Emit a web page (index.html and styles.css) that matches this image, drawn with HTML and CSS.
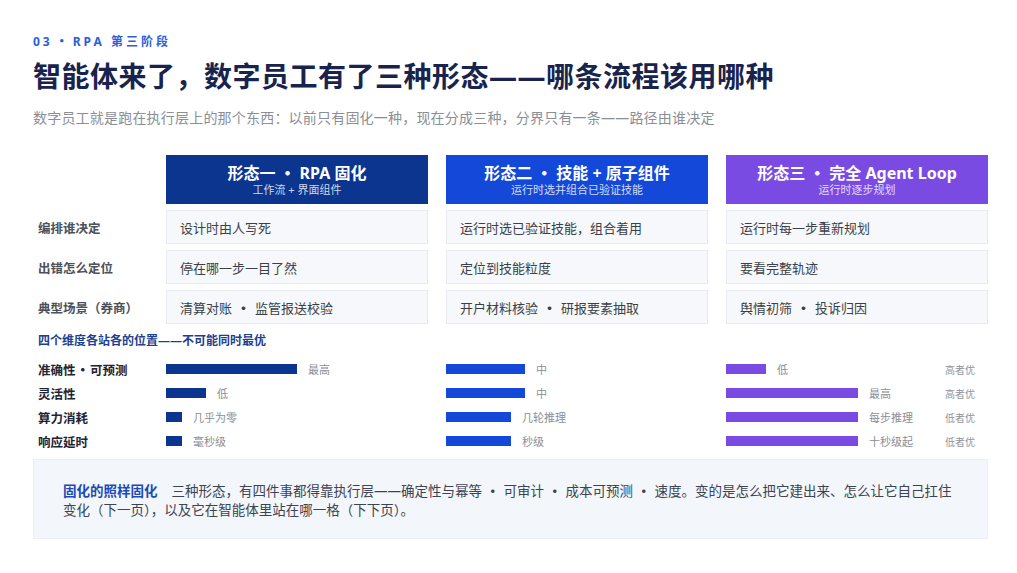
FILE: index.html
```html
<!DOCTYPE html>
<html lang="zh-CN">
<head>
<meta charset="utf-8">
<title>RPA 第三阶段</title>
<link rel="stylesheet" href="styles.css">
</head>
<body>
<div class="page">
  <div class="tag">03<span class="sep">·</span>RPA 第三阶段</div>
  <h1 class="title">智能体来了，数字员工有了三种形态——哪条流程该用哪种</h1>
  <p class="subtitle">数字员工就是跑在执行层上的那个东西：以前只有固化一种，现在分成三种，分界只有一条——路径由谁决定</p>

  <div class="matrix">
    <div class="corner"></div>
    <div class="head head-1">
      <div class="head-title">形态一<span class="sep">·</span>RPA 固化</div>
      <div class="head-sub">工作流 + 界面组件</div>
    </div>
    <div class="head head-2">
      <div class="head-title">形态二<span class="sep">·</span>技能 + 原子组件</div>
      <div class="head-sub">运行时选并组合已验证技能</div>
    </div>
    <div class="head head-3">
      <div class="head-title">形态三<span class="sep">·</span>完全 Agent Loop</div>
      <div class="head-sub">运行时逐步规划</div>
    </div>

    <div class="rlabel">编排谁决定</div>
    <div class="cell">设计时由人写死</div>
    <div class="cell">运行时选已验证技能，组合着用</div>
    <div class="cell">运行时每一步重新规划</div>

    <div class="rlabel">出错怎么定位</div>
    <div class="cell">停在哪一步一目了然</div>
    <div class="cell">定位到技能粒度</div>
    <div class="cell">要看完整轨迹</div>

    <div class="rlabel">典型场景（券商）</div>
    <div class="cell">清算对账<span class="sep">·</span>监管报送校验</div>
    <div class="cell">开户材料核验<span class="sep">·</span>研报要素抽取</div>
    <div class="cell">舆情初筛<span class="sep">·</span>投诉归因</div>
  </div>

  <div class="dims-title">四个维度各站各的位置——不可能同时最优</div>
  <div class="dims">
    <div class="dlabel">准确性<span class="sep">·</span>可预测</div>
    <div class="dcell"><div class="bar bar-1" style="width:131px"></div><span class="val">最高</span></div>
    <div class="dcell"><div class="bar bar-2" style="width:79px"></div><span class="val">中</span></div>
    <div class="dcell"><div class="bar bar-3" style="width:40px"></div><span class="val">低</span><span class="hint">高者优</span></div>

    <div class="dlabel">灵活性</div>
    <div class="dcell"><div class="bar bar-1" style="width:40px"></div><span class="val">低</span></div>
    <div class="dcell"><div class="bar bar-2" style="width:79px"></div><span class="val">中</span></div>
    <div class="dcell"><div class="bar bar-3" style="width:132px"></div><span class="val">最高</span><span class="hint">高者优</span></div>

    <div class="dlabel">算力消耗</div>
    <div class="dcell"><div class="bar bar-1" style="width:16px"></div><span class="val">几乎为零</span></div>
    <div class="dcell"><div class="bar bar-2" style="width:65px"></div><span class="val">几轮推理</span></div>
    <div class="dcell"><div class="bar bar-3" style="width:132px"></div><span class="val">每步推理</span><span class="hint">低者优</span></div>

    <div class="dlabel">响应延时</div>
    <div class="dcell"><div class="bar bar-1" style="width:16px"></div><span class="val">毫秒级</span></div>
    <div class="dcell"><div class="bar bar-2" style="width:65px"></div><span class="val">秒级</span></div>
    <div class="dcell"><div class="bar bar-3" style="width:132px"></div><span class="val">十秒级起</span><span class="hint">低者优</span></div>
  </div>

  <div class="note">
    <p><strong class="note-label">固化的照样固化</strong>三种形态，有四件事都得靠执行层——确定性与幂等<span class="sep sep-s">·</span>可审计<span class="sep sep-s">·</span>成本可预测<span class="sep sep-s">·</span>速度。变的是怎么把它建出来、怎么让它自己扛住变化（下一页），以及它在智能体里站在哪一格（下下页）。</p>
  </div>
</div>
</body>
</html>
```

FILE: styles.css
```css
* { box-sizing: border-box; }

html, body {
  margin: 0;
  padding: 0;
  background: #ffffff;
}

body {
  font-family: "Noto Sans", "Noto Sans CJK SC", sans-serif;
  color: #2b303a;
}

.page {
  width: 1017px;
  height: 573px;
  padding: 33px 29px 0 33px;
}

.tag {
  font-size: 12px;
  line-height: 16px;
  font-weight: 700;
  letter-spacing: 3px;
  color: #2c5fd8;
}

.tag .sep { margin: 0 2px 0 3px; }

.title {
  margin: 8px 0 0;
  font-size: 28px;
  line-height: 36px;
  font-weight: 700;
  color: #18244d;
  letter-spacing: 0.5px;
}

.subtitle {
  margin: 14px 0 0;
  font-size: 14px;
  line-height: 20px;
  color: #8a8e97;
  letter-spacing: 0.2px;
}

.sep {
  font-family: "Noto Sans CJK SC", sans-serif;
  font-weight: 900;
  margin: 0 5px;
}

/* ---------- matrix ---------- */
.matrix {
  margin-top: 27px;
  display: grid;
  grid-template-columns: 115px 262px 262px 262px;
  grid-template-rows: 49px 34px 34px 34px;
  column-gap: 18px;
  row-gap: 6px;
}

.head {
  display: flex;
  flex-direction: column;
  align-items: center;
  justify-content: center;
  color: #ffffff;
  padding-top: 1px;
}

.head-1 { background: #0b358f; }
.head-2 { background: #1448d8; }
.head-3 { background: #7a4be3; }

.head-title {
  font-size: 16px;
  line-height: 19px;
  font-weight: 700;
}

.head-title .sep { margin: 0 4px; }

.head-sub {
  font-size: 11px;
  line-height: 14px;
  color: rgba(255, 255, 255, 0.82);
}

.rlabel {
  display: flex;
  align-items: center;
  padding-left: 5px;
  font-size: 12.5px;
  font-weight: 700;
  color: #4b505a;
}

.cell {
  display: flex;
  align-items: center;
  padding-left: 13px;
  font-size: 13px;
  color: #3a3f48;
  background: #f6f8fb;
  border: 1px solid #e8ecf2;
}

.cell .sep { margin: 0 5px; }

/* ---------- dimensions ---------- */
.dims-title {
  margin-top: 9px;
  padding-left: 5px;
  font-size: 12px;
  line-height: 16px;
  font-weight: 700;
  color: #1d3f8f;
}

.dims {
  margin-top: 8px;
  display: grid;
  grid-template-columns: 115px 262px 262px 262px;
  grid-auto-rows: 24px;
  column-gap: 18px;
}

.dlabel {
  display: flex;
  align-items: center;
  padding-left: 5px;
  font-size: 12.5px;
  font-weight: 700;
  color: #1e2433;
}

.dlabel .sep { margin: 0 1px; }

.dcell {
  display: flex;
  align-items: center;
}

.bar {
  height: 10px;
  flex: none;
}

.bar-1 { background: #0b358f; }
.bar-2 { background: #1448d8; }
.bar-3 { background: #7a4be3; }

.val {
  margin-left: 11px;
  font-size: 11px;
  color: #8a8e97;
}

.hint {
  margin-left: auto;
  padding-right: 13px;
  font-size: 10px;
  color: #8f939b;
}

/* ---------- note ---------- */
.note {
  margin-top: 6px;
  height: 80px;
  padding: 21px 29px 0;
  background: #f3f6fb;
  border: 1px solid #ebeff6;
}

.note p {
  margin: 0;
  font-size: 13.5px;
  line-height: 19px;
  color: #3d4350;
}

.note-label {
  color: #1e4ab8;
  font-weight: 700;
  margin-right: 14px;
}

.note .sep-s {
  font-weight: 700;
  margin: 0 4px;
}
```
